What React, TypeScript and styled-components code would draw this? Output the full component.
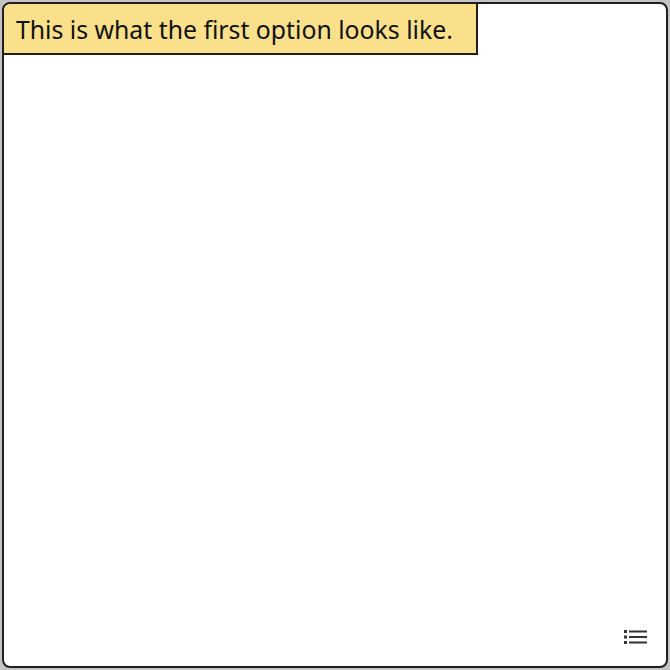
import React from 'react';
import styled, { createGlobalStyle } from 'styled-components';

const GlobalStyle = createGlobalStyle`
  html, body {
    margin: 0;
    padding: 0;
    background: #c4c4c4;
  }
  * {
    box-sizing: border-box;
  }
`;

const Outer = styled.div`
  width: 670px;
  height: 670px;
  padding: 2px;
  background: #c4c4c4;
`;

const Frame = styled.div`
  position: relative;
  width: 100%;
  height: 100%;
  display: flex;
  flex-direction: column;
  align-items: flex-start;
  background: #ffffff;
  border: 2px solid #1f1f1f;
  border-radius: 8px;
  overflow: hidden;
`;

const Caption = styled.div`
  background: #fbe08c;
  border-right: 2px solid #1f1f1f;
  border-bottom: 2px solid #1f1f1f;
  border-top-left-radius: 6px;
  padding: 10px 23px 9px 12px;
  font-family: 'Noto Sans', 'Open Sans', sans-serif;
  font-size: 24.8px;
  line-height: 30px;
  color: #111111;
  white-space: nowrap;
`;

const Spacer = styled.div`
  flex: 1;
`;

const Footer = styled.div`
  align-self: stretch;
  display: flex;
  justify-content: flex-end;
  padding: 0 19px 22px 0;
`;

const ListButton = styled.button`
  border: none;
  background: transparent;
  padding: 0;
  display: flex;
  cursor: pointer;
  color: #333333;
`;

function ListIcon() {
  return (
    <svg width="23" height="14" viewBox="0 0 23 14" fill="currentColor">
      <rect x="0" y="0" width="3" height="3" />
      <rect x="0" y="5.5" width="3" height="3" />
      <rect x="0" y="11" width="3" height="3" />
      <rect x="5" y="0.5" width="18" height="2" />
      <rect x="5" y="6" width="18" height="2" />
      <rect x="5" y="11.5" width="18" height="2" />
    </svg>
  );
}

export default function App() {
  return (
    <>
      <GlobalStyle />
      <Outer>
        <Frame>
          <Caption>This is what the first option looks like.</Caption>
          <Spacer />
          <Footer>
            <ListButton aria-label="Options list">
              <ListIcon />
            </ListButton>
          </Footer>
        </Frame>
      </Outer>
    </>
  );
}
